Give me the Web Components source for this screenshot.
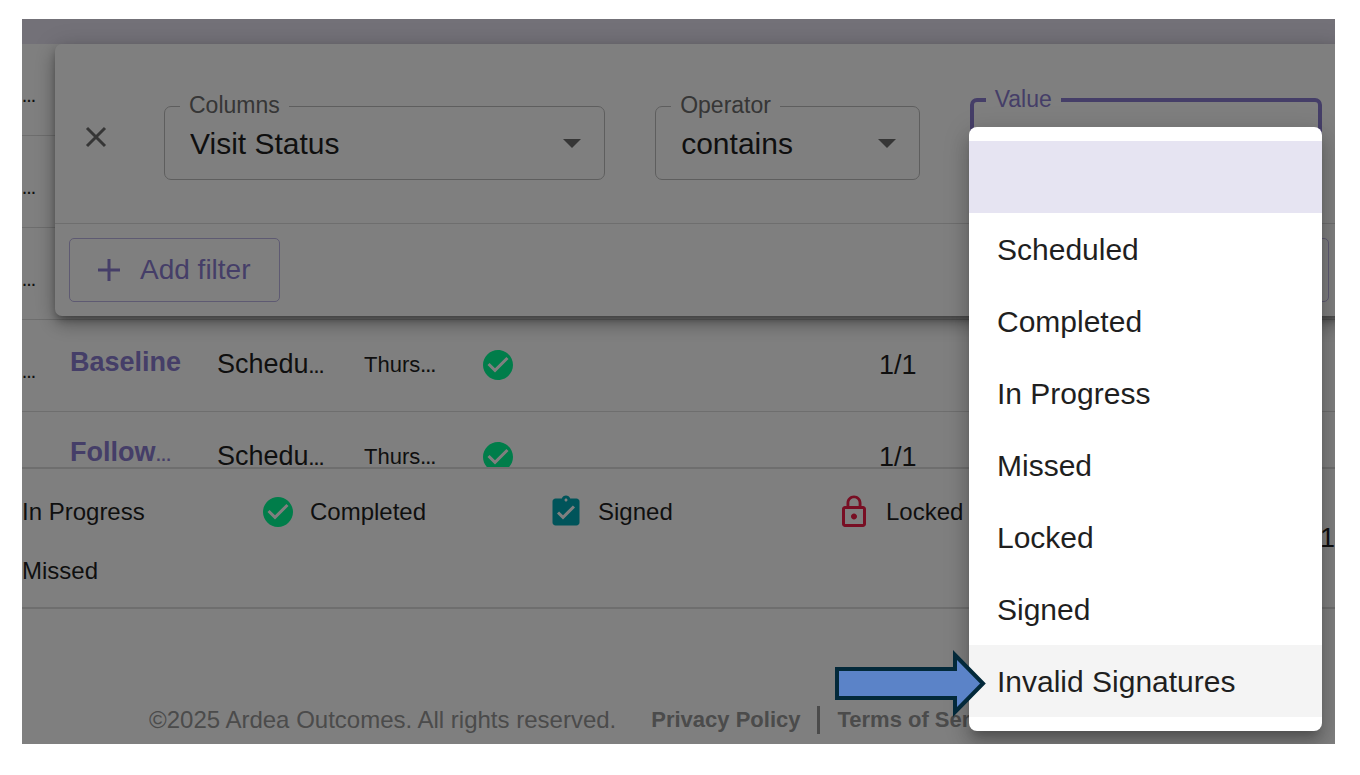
<!DOCTYPE html>
<html lang="en">
<head>
<meta charset="utf-8">
<title>Visits</title>
<style>
  body {
    margin: 0;
    padding: 19px 25px 31px 22px;
    background: #fff;
    color: #1f1f1f;
    font-family: "Liberation Sans", Arial, sans-serif;
    --primary: #8a7cd0;
    --line: #dcdcdc;
  }
</style>
</head>
<body>
<visit-page>
  <visit-table></visit-table>
  <status-legend></status-legend>
  <site-footer></site-footer>
  <filter-panel slot="panel"></filter-panel>
  <option-menu slot="menu"></option-menu>
  <pointer-arrow slot="menu"></pointer-arrow>
</visit-page>

<script>
function define(name, html) {
  const template = document.createElement('template');
  template.innerHTML = html;
  customElements.define(name, class extends HTMLElement {
    constructor() {
      super();
      this.attachShadow({ mode: 'open' }).appendChild(template.content.cloneNode(true));
    }
  });
}

const ICONS = {
  completed: ['#00fa94', 'M12 2C6.5 2 2 6.5 2 12s4.500 10 10 10 10-4.500 10-10S17.500 2 12 2zm-2 15l-5-5 1.400-1.400L10 14.200l7.600-7.600L19 8l-9 9z'],
  signed: ['#00a8b4', 'M19 3h-4.200C14.400 1.800 13.300 1 12 1s-2.400.8-2.800 2H5c-1.100 0-2 .9-2 2v14c0 1.100.9 2 2 2h14c1.100 0 2-.9 2-2V5c0-1.100-.9-2-2-2zm-7 0c.55 0 1 .45 1 1s-.45 1-1 1-1-.45-1-1 .45-1 1-1zm-2 14l-4-4 1.400-1.400L10 14.200l6.600-6.600L18 9l-8 8z'],
  locked: ['#f01c46', 'M12 17c1.100 0 2-.9 2-2s-.9-2-2-2-2 .9-2 2 .9 2 2 2zm6-9h-1V6c0-2.800-2.200-5-5-5S7 3.200 7 6v2H6c-1.100 0-2 .9-2 2v10c0 1.100.9 2 2 2h12c1.100 0 2-.9 2-2V10c0-1.100-.9-2-2-2zM8.900 6c0-1.700 1.400-3.100 3.100-3.100s3.100 1.400 3.100 3.100v2H8.900V6zM18 20H6V10h12v10z']
};

class StatusIcon extends HTMLElement {
  constructor() {
    super();
    this.attachShadow({ mode: 'open' });
  }

  connectedCallback() {
    const [color, path] = ICONS[this.getAttribute('name')];
    this.shadowRoot.innerHTML = `
      <style>
        :host { display: block; width: 36px; height: 36px; flex: none; }
        svg { display: block; }
      </style>
      <svg width="36" height="36" viewBox="0 0 24 24" fill="${color}" aria-hidden="true"><path d="${path}"/></svg>
    `;
  }
}
customElements.define('status-icon', StatusIcon);

class OutlinedSelect extends HTMLElement {
  constructor() {
    super();
    this.attachShadow({ mode: 'open' });
  }

  connectedCallback() {
    this.shadowRoot.innerHTML = `
      <style>
        :host { display: block; position: relative; min-width: 0; }
        label {
          position: absolute;
          top: -14px;
          left: 16px;
          padding: 0 9px;
          background: #fff;
          color: #6c6c6c;
          font-size: 23px;
          line-height: 26px;
        }
        select {
          appearance: none;
          display: block;
          box-sizing: border-box;
          width: 100%;
          height: 74px;
          margin: 0;
          padding: 0 60px 0 25px;
          border: 1px solid #bdbdbd;
          border-radius: 7px;
          background: transparent;
          color: inherit;
          font: inherit;
          font-size: 30px;
        }
        svg { position: absolute; right: 24px; top: 33px; }
        :host([focused]) select { height: 82px; border: 4px solid var(--primary); }
        :host([focused]) label { color: var(--primary); top: -12px; }
      </style>
      <label for="field">${this.getAttribute('label')}</label>
      <select id="field"><option>${this.getAttribute('value')}</option></select>
      <svg width="18" height="9" viewBox="0 0 18 9" fill="#6c6c6c" aria-hidden="true"><path d="M0 0h18L9 9z"/></svg>
    `;
  }
}
customElements.define('outlined-select', OutlinedSelect);

define('visit-page', `
  <style>
    :host {
      display: block;
      position: relative;
      overflow: hidden;
      min-height: calc(100vh - 50px);
      background: #fff;
    }
    .backdrop { position: absolute; inset: 0; background: rgba(0, 0, 0, 0.5); }
  </style>
  <slot></slot>
  <slot name="panel"></slot>
  <div class="backdrop"></div>
  <slot name="menu"></slot>
`);

define('visit-table', `
  <style>
    :host { display: block; height: 448px; overflow: hidden; border-bottom: 2px solid var(--line); }
    .head { height: 25px; background: #e6e2f0; }
    table { width: 100%; table-layout: fixed; border-collapse: separate; border-spacing: 0; }
    td {
      box-sizing: border-box;
      height: 92px;
      padding: 0;
      border-bottom: 1px solid var(--line);
      font-size: 27px;
      line-height: 30px;
      white-space: nowrap;
    }
    td:first-child { padding-top: 10px; }
    .link { padding-bottom: 8px; }
    .date { font-size: 22px; }
    .icon, .count { padding-bottom: 2px; }
    a { color: var(--primary); font-weight: bold; text-decoration: none; }
    small { font-size: 16px; font-weight: bold; }
    td:first-child small { font-size: 14px; }
  </style>
  <div class="head"></div>
  <table>
    <colgroup>
      <col style="width: 48px"><col style="width: 147px"><col style="width: 147px">
      <col style="width: 116px"><col style="width: 399px"><col>
    </colgroup>
    <tbody>
      <tr><td><small>…</small></td><td colspan="5"></td></tr>
      <tr><td><small>…</small></td><td colspan="5"></td></tr>
      <tr><td><small>…</small></td><td colspan="5"></td></tr>
      <tr>
        <td><small>…</small></td>
        <td class="link"><a href="#baseline">Baseline</a></td>
        <td>Schedu<small>…</small></td>
        <td class="date">Thurs<small>…</small></td>
        <td class="icon"><status-icon name="completed"></status-icon></td>
        <td class="count">1/1</td>
      </tr>
      <tr>
        <td><small>…</small></td>
        <td class="link"><a href="#follow-up">Follow<small>…</small></a></td>
        <td>Schedu<small>…</small></td>
        <td class="date">Thurs<small>…</small></td>
        <td class="icon"><status-icon name="completed"></status-icon></td>
        <td class="count">1/1</td>
      </tr>
    </tbody>
  </table>
`);

define('status-legend', `
  <style>
    :host {
      display: flex;
      justify-content: space-between;
      align-items: center;
      padding: 25px 0 18px;
      border-bottom: 2px solid var(--line);
      font-size: 24px;
    }
    ul {
      display: grid;
      grid-template-columns: 238px 288px 288px auto;
      row-gap: 23px;
      margin: 0;
      padding: 0;
      list-style: none;
    }
    li { display: flex; align-items: center; gap: 14px; height: 36px; }
    .page { padding-bottom: 6px; font-size: 27px; }
  </style>
  <ul>
    <li>In Progress</li>
    <li><status-icon name="completed"></status-icon>Completed</li>
    <li><status-icon name="signed"></status-icon>Signed</li>
    <li><status-icon name="locked"></status-icon>Locked</li>
    <li>Missed</li>
  </ul>
  <span class="page">1</span>
`);

define('site-footer', `
  <style>
    :host {
      display: flex;
      align-items: center;
      padding: 95px 0 7px 127px;
      color: #969696;
      font-size: 24px;
      line-height: 32px;
      white-space: nowrap;
    }
    nav { display: flex; align-items: center; gap: 17px; margin-left: 35px; font-size: 22px; }
    a { color: inherit; font-weight: bold; text-decoration: none; }
    .bar { width: 3px; height: 28px; background: #969696; }
  </style>
  <span>©2025 Ardea Outcomes. All rights reserved.</span>
  <nav>
    <a href="#privacy">Privacy Policy</a>
    <span class="bar"></span>
    <a href="#terms">Terms of Service</a>
  </nav>
`);

define('filter-panel', `
  <style>
    :host {
      position: absolute;
      top: 25px;
      left: 33px;
      right: -8px;
      border-radius: 7px;
      background: #fff;
      box-shadow: 0 5px 9px -2px rgba(0, 0, 0, 0.36), 0 9px 18px rgba(0, 0, 0, 0.2), 0 3px 26px rgba(0, 0, 0, 0.16);
    }
    button {
      display: flex;
      align-items: center;
      box-sizing: border-box;
      margin: 0;
      background: none;
      color: var(--primary);
      font: inherit;
      font-size: 28px;
    }
    .fields { display: flex; align-items: flex-end; gap: 50px; padding: 50px 21px 43px 0; }
    .close { justify-content: center; width: 82px; height: 86px; margin-right: -23px; padding: 0; border: 0; }
    .columns { flex: 442 1 0; }
    .operator { flex: 265 1 0; }
    .value { flex: 353 1 0; }
    .actions { display: flex; justify-content: space-between; padding: 14px; border-top: 1px solid var(--line); }
    .action { gap: 20px; height: 64px; padding: 0 28px; border: 1px solid #bcb4e4; border-radius: 5px; }
    .clear { width: 230px; }
    svg { flex: none; }
  </style>
  <div class="fields">
    <button class="close" aria-label="Delete">
      <svg width="22" height="22" viewBox="0 0 22 22" fill="none" stroke="#6c6c6c" stroke-width="3" aria-hidden="true"><path d="M2 2l18 18M20 2L2 20"/></svg>
    </button>
    <outlined-select class="columns" label="Columns" value="Visit Status"></outlined-select>
    <outlined-select class="operator" label="Operator" value="contains"></outlined-select>
    <outlined-select class="value" label="Value" value="" focused></outlined-select>
  </div>
  <div class="actions">
    <button class="action">
      <svg width="22" height="22" viewBox="0 0 22 22" fill="none" stroke="currentColor" stroke-width="3" aria-hidden="true"><path d="M11 0v22M0 11h22"/></svg>
      Add filter
    </button>
    <button class="action clear" aria-label="Clear filters"></button>
  </div>
`);

define('option-menu', `
  <style>
    :host {
      position: absolute;
      top: 108px;
      right: 13px;
      width: 353px;
      border-radius: 8px;
      background: #fff;
      box-shadow: 0 9px 9px -5px rgba(0, 0, 0, 0.2), 0 14px 18px 2px rgba(0, 0, 0, 0.14), 0 5px 25px 4px rgba(0, 0, 0, 0.12);
    }
    ul { margin: 0; padding: 14px 0; list-style: none; }
    li { height: 72px; padding: 0 28px; font-size: 30px; line-height: 74px; white-space: nowrap; }
    [aria-selected] { background: #e6e4f2; }
    .hover { background: #f4f4f4; }
  </style>
  <ul role="listbox" aria-label="Value">
    <li role="option" aria-selected="true"></li>
    <li role="option">Scheduled</li>
    <li role="option">Completed</li>
    <li role="option">In Progress</li>
    <li role="option">Missed</li>
    <li role="option">Locked</li>
    <li role="option">Signed</li>
    <li role="option" class="hover">Invalid Signatures</li>
  </ul>
`);

define('pointer-arrow', `
  <style>
    :host { position: absolute; top: 630px; right: 349px; }
    svg { display: block; }
  </style>
  <svg width="154" height="70" viewBox="0 0 154 70" fill="#5b83c8" stroke="#03293a" stroke-width="4" aria-hidden="true">
    <path d="M5 20h118V6l28 28.500L123 63V49H5z"/>
  </svg>
`);
</script>
</body>
</html>
